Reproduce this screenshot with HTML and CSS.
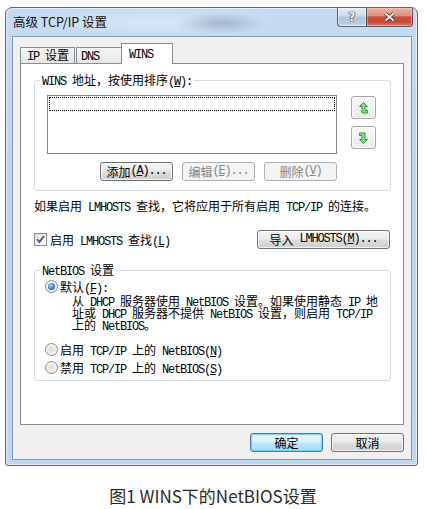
FILE: index.html
```html
<!DOCTYPE html>
<html lang="zh-CN">
<head>
<meta charset="utf-8">
<title>高级 TCP/IP 设置</title>
<link rel="stylesheet" href="styles.css">
</head>
<body>
<div class="page">
  <div class="window">
    <div class="titlebar">
      <div class="title">高级 TCP/IP 设置</div>
      <div class="caption-buttons">
        <div class="cbtn help"><span class="help-glyph">?</span></div>
        <div class="cbtn close">
          <svg width="13" height="10" viewBox="0 0 13 10"><path d="M2.5 1.5 L10.5 8.5 M10.5 1.5 L2.5 8.5" stroke="#5a2018" stroke-width="3.6" fill="none"/><path d="M2.5 1.5 L10.5 8.5 M10.5 1.5 L2.5 8.5" stroke="#ffffff" stroke-width="1.8" fill="none"/></svg>
        </div>
      </div>
    </div>
    <div class="client">
      <div class="tabs">
        <div class="tab tab-ip"><span class="en">IP </span>设置</div>
        <div class="tab tab-dns"><span class="en">DNS</span></div>
        <div class="tab tab-wins active"><span class="en">WINS</span></div>
      </div>
      <div class="panel">
        <fieldset class="group group-wins">
          <legend><span class="en">WINS </span>地址，按使用排序<span class="en">(<u>W</u>):</span></legend>
          <div class="wins-body">
            <div class="list-row">
              <div class="listbox"><div class="focus-row"></div></div>
              <div class="arrows">
                <div class="btn arrow-btn">
                  <svg width="9" height="12" viewBox="0 0 9 12"><polygon points="4.5,0.5 8.5,4.5 6,4.5 6,8.5 8.5,8.5 8.5,11 3,11 3,4.5 0.5,4.5" fill="#86e386" stroke="#2f9b38" stroke-width="1"/></svg>
                </div>
                <div class="btn arrow-btn">
                  <svg width="9" height="12" viewBox="0 0 9 12"><polygon points="4.5,0.5 8.5,4.5 6,4.5 6,8.5 8.5,8.5 8.5,11 3,11 3,4.5 0.5,4.5" fill="#86e386" stroke="#2f9b38" stroke-width="1" transform="rotate(180 4.5 6)"/></svg>
                </div>
              </div>
            </div>
            <div class="btn-row">
              <div class="btn">添加<span class="en">(<u>A</u>)...</span></div>
              <div class="btn disabled">编辑<span class="en">(<u>E</u>)...</span></div>
              <div class="btn disabled">删除<span class="en">(<u>V</u>)</span></div>
            </div>
          </div>
        </fieldset>
        <p class="note">如果启用<span class="en"> LMHOSTS </span>查找，它将应用于所有启用<span class="en"> TCP/IP </span>的连接。</p>
        <div class="check-row">
          <div class="check">
            <span class="checkbox"><svg width="11" height="11" viewBox="0 0 11 11"><path d="M2 5.2 L4.4 8 L9 2.2" stroke="#4a5e94" stroke-width="1.9" fill="none"/></svg></span>
            <span>启用<span class="en"> LMHOSTS </span>查找<span class="en">(<u>L</u>)</span></span>
          </div>
          <div class="btn import">导入<span class="en"> LMHOSTS(<u>M</u>)...</span></div>
        </div>
        <fieldset class="group group-netbios">
          <legend><span class="en">NetBIOS </span>设置</legend>
          <div class="nb-body">
            <div class="radio-row r1"><span class="radio on"><span class="dot"></span></span><span>默认<span class="en">(<u>F</u>):</span></span></div>
            <p class="desc">从<span class="en"> DHCP </span>服务器使用<span class="en"> NetBIOS </span>设置。如果使用静态<span class="en"> IP </span>地<br>址或<span class="en"> DHCP </span>服务器不提供<span class="en"> NetBIOS </span>设置，则启用<span class="en"> TCP/IP</span><br>上的<span class="en"> NetBIOS</span>。</p>
            <div class="radio-row r2"><span class="radio"></span><span>启用<span class="en"> TCP/IP </span>上的<span class="en"> NetBIOS(<u>N</u>)</span></span></div>
            <div class="radio-row r3"><span class="radio"></span><span>禁用<span class="en"> TCP/IP </span>上的<span class="en"> NetBIOS(<u>S</u>)</span></span></div>
          </div>
        </fieldset>
      </div>
      <div class="dialog-buttons">
        <div class="btn default">确定</div>
        <div class="btn">取消</div>
      </div>
    </div>
  </div>
  <div class="figcaption">图1 WINS下的NetBIOS设置</div>
</div>
</body>
</html>
```

FILE: styles.css
```css
* { box-sizing: border-box; }
html, body { margin: 0; padding: 0; background: #ffffff; }
body {
  font-family: "Noto Sans CJK SC", sans-serif;
  font-size: 12px;
  line-height: 12px;
  color: #000;
}
.en {
  font-family: "Liberation Mono", "Noto Sans CJK SC", monospace;
  font-size: 12px;
  line-height: 1px;
  letter-spacing: -1.2px;
  white-space: pre;
}
u { text-decoration: underline; text-underline-offset: 1px; }

.page { padding: 7px 0 0 5px; }

.window {
  width: 413px;
  height: 459px;
  border: 1px solid #56677d;
  border-radius: 7px 7px 3px 3px;
  background:
    radial-gradient(ellipse 45px 11px at 215px 15px, rgba(110, 130, 158, 0.45), rgba(110, 130, 158, 0) 100%),
    radial-gradient(ellipse 120px 14px at 150px 14px, rgba(255, 255, 255, 0.35), rgba(255, 255, 255, 0) 100%),
    linear-gradient(180deg, #c6dbf2 0%, #bcd4ee 40%, #bfd6ef 100%);
  display: flex;
  flex-direction: column;
  box-shadow: inset 0 0 0 1px rgba(255, 255, 255, 0.55);
}

.titlebar {
  height: 28px;
  display: flex;
  align-items: flex-start;
  flex: none;
}
.title {
  padding: 6px 0 0 7px;
  font-size: 12.5px;
  line-height: 16px;
  color: #111;
}
.caption-buttons {
  margin-left: auto;
  margin-right: 4px;
  display: flex;
}
.cbtn {
  height: 19px;
  display: flex;
  align-items: center;
  justify-content: center;
  border: 1px solid rgba(45, 58, 78, 0.75);
  border-top: none;
}
.help {
  width: 29px;
  border-right: none;
  border-bottom-left-radius: 4px;
  background: linear-gradient(180deg, #e3ecf6 0%, #cddbea 45%, #b3c6db 50%, #b7cade 85%, #cfdcea 100%);
  box-shadow: inset 0 0 0 1px rgba(255, 255, 255, 0.45);
}
.help-glyph {
  font-family: "DejaVu Sans", sans-serif;
  font-weight: bold;
  font-size: 12px;
  line-height: 12px;
  color: #f8fafc;
  text-shadow: 0 0 1px #1d2a3a, 0 0 1px #1d2a3a, 0 0 1px #1d2a3a;
}
.close {
  width: 47px;
  border-bottom-right-radius: 4px;
  background: linear-gradient(180deg, #ebb3a6 0%, #de8f80 42%, #c9503c 50%, #c44a35 78%, #dd8165 100%);
  box-shadow: inset 0 0 0 1px rgba(255, 210, 200, 0.45);
}

.client {
  flex: 1;
  margin: 0 5px 5px 6px;
  background: #f0f0f0;
  border: 1px solid #8497ad;
  padding: 6px 7px 7px 7px;
  display: flex;
  flex-direction: column;
}

.tabs {
  height: 20px;
  display: flex;
  align-items: flex-end;
  flex: none;
}
.tab {
  height: 16px;
  border: 1px solid #898c95;
  border-bottom: none;
  background: linear-gradient(180deg, #f7f7f7 0%, #efefef 50%, #e6e6e6 100%);
  padding-top: 1px;
  white-space: nowrap;
}
.tab-ip { width: 55px; padding-left: 6px; }
.tab-dns { width: 46px; margin-left: 1px; padding-left: 4px; }
.tab-wins { width: 52px; margin-left: -1px; padding-left: 7px; }
.tab.active {
  height: 21px;
  margin-bottom: -1px;
  background: #ffffff;
  padding-top: 3px;
  position: relative;
  z-index: 1;
}

.panel {
  height: 362px;
  border: 1px solid #898c95;
  background: #ffffff;
  flex: none;
}

.group {
  margin: 0 0 0 13px;
  padding: 0;
  width: 357px;
  border: 1px solid #d5dfe5;
  border-radius: 3px;
  min-width: 0;
}
.group legend {
  padding: 0 2px;
  margin-left: 5px;
  line-height: 12px;
  height: 12px;
}
.group-wins { margin-top: 10px; }
.wins-body { padding: 9px 0 9px 12px; }
.list-row { display: flex; align-items: flex-start; }
.listbox {
  width: 290px;
  height: 59px;
  border: 1px solid #828790;
  background: #fff;
  padding: 1px;
}
.focus-row {
  height: 14px;
  border: 1px dotted #000;
}
.arrows {
  margin-left: 14px;
  margin-top: 1px;
  display: flex;
  flex-direction: column;
  gap: 7px;
}

.btn {
  height: 19px;
  display: flex;
  align-items: center;
  justify-content: center;
  border: 1px solid #707070;
  border-radius: 3px;
  background: linear-gradient(180deg, #f3f3f3 0%, #ebebeb 48%, #dddddd 52%, #cfcfcf 100%);
  box-shadow: inset 0 0 0 1px rgba(255, 255, 255, 0.75);
  white-space: nowrap;
  color: #000;
}
.btn.disabled {
  border-color: #adb2b5;
  background: #f4f4f4;
  color: #838383;
  box-shadow: none;
}
.arrow-btn {
  width: 25px;
  height: 23px;
  border-color: #a7a7a7;
  background: linear-gradient(180deg, #f8f8f8 0%, #f1f1f1 50%, #e9e9e9 100%);
}
.btn-row {
  margin-top: 8px;
  width: 290px;
  display: flex;
  justify-content: flex-end;
  gap: 9px;
}
.btn-row .btn { width: 73px; }

.note {
  margin: 9px 0 0 13px;
  white-space: nowrap;
}

.check-row {
  margin: 18px 0 0 13px;
  width: 357px;
  display: flex;
  align-items: center;
}
.check { display: flex; align-items: center; gap: 3px; white-space: nowrap; }
.checkbox {
  width: 13px;
  height: 13px;
  border: 1px solid #8e8f8f;
  background: linear-gradient(135deg, #dcdcdc 0%, #f4f4f4 60%, #ffffff 100%);
  display: flex;
  align-items: center;
  justify-content: center;
}
.import {
  margin-left: auto;
  margin-right: 1px;
  width: 133px;
}

.group-netbios { margin-top: 15px; }
.nb-body { padding: 4px 0 6px 10px; }
.radio-row {
  height: 13px;
  display: flex;
  align-items: center;
  gap: 2px;
  white-space: nowrap;
}
.radio {
  width: 13px;
  height: 13px;
  border-radius: 50%;
  border: 1px solid #8b8b8b;
  background: radial-gradient(circle at 50% 50%, #dadada 0%, #eeeeee 55%, #fbfbfb 100%);
  display: flex;
  align-items: center;
  justify-content: center;
  flex: none;
}
.radio .dot {
  width: 7px;
  height: 7px;
  border-radius: 50%;
  background: radial-gradient(circle at 40% 35%, #b5e2fd 0%, #3a8ee0 45%, #1a52a6 100%);
}
.desc {
  margin: 2px 0 0 27px;
  white-space: nowrap;
}
.r2 { margin-top: 12px; }
.r3 { margin-top: 5px; }

.dialog-buttons {
  margin-top: 8px;
  display: flex;
  justify-content: flex-end;
  gap: 8px;
}
.dialog-buttons .btn { width: 73px; }
.btn.default {
  border-color: #3c7fb1;
  background: linear-gradient(180deg, #eaf6fd 0%, #d9f0fc 48%, #bee6fd 52%, #a7d9f5 100%);
  box-shadow: inset 0 0 1px 1px #6fd0f5;
}

.figcaption {
  margin: 20px 0 0 -5px;
  text-align: center;
  font-size: 17px;
  line-height: 20px;
  color: #2a2a2a;
}
```
